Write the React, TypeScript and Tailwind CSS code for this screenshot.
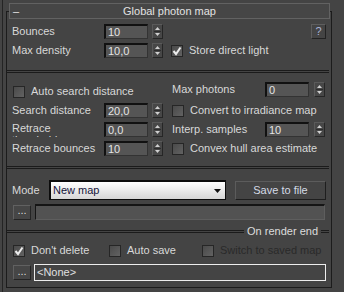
import React from 'react'

function Spinner() {
  return (
    <div className="w-[11px] h-[15px] border border-t-[#5a5a5a] border-l-[#5a5a5a] border-r-[#262626] border-b-[#262626] bg-[#474747] flex flex-col shrink-0">
      <svg width="9" height="13" viewBox="0 0 9 13">
        <path d="M4.5 2 L7 5 L2 5 Z" fill="#d0d0d0" />
        <line x1="1" y1="6.5" x2="8" y2="6.5" stroke="#2c2c2c" strokeWidth="1" />
        <path d="M2 8 L7 8 L4.5 11 Z" fill="#d0d0d0" />
      </svg>
    </div>
  )
}

function NumField({ value }: { value: string }) {
  return (
    <div className="w-[44px] h-[15px] shrink-0 bg-[#555555] border-t-2 border-l-2 border-t-[#111] border-l-[#111] border-r border-b border-r-[#333] border-b-[#333] pl-[2px] flex items-center text-[#e4e4e4] leading-none">
      {value}
    </div>
  )
}

function Check({ checked, label, disabled }: { checked?: boolean; label: string; disabled?: boolean }) {
  return (
    <div className="flex items-center gap-[6px] h-[15px]">
      <div className="w-[12px] h-[12px] shrink-0 border border-[#262626] bg-gradient-to-br from-[#4a4a4a] to-[#626262] flex items-center justify-center">
        {checked && (
          <svg width="10" height="10" viewBox="0 0 10 10">
            <path d="M1.5 5 L4 8 L8.5 1.5" fill="none" stroke="#ececec" strokeWidth="2" />
          </svg>
        )}
      </div>
      <span className={disabled ? 'text-[#2a2a2a] whitespace-nowrap' : 'text-[#d8d8d8] whitespace-nowrap'}>{label}</span>
    </div>
  )
}

function DotsButton() {
  return (
    <div className="w-[18px] h-[15px] shrink-0 border border-t-[#616161] border-l-[#616161] border-r-[#242424] border-b-[#242424] bg-[#464646] flex items-center justify-center text-[#dcdcdc] leading-none pb-[3px]">
      ...
    </div>
  )
}

function Separator() {
  return <div className="w-[322px] h-[3px] border-y border-[#1b1b1b] shrink-0" />
}

export default function App() {
  return (
    <div className="w-[344px] h-[292px] bg-[#444444] overflow-hidden flex font-['Liberation_Sans',Arial,sans-serif] text-[11px] text-[#d8d8d8]">
      <div className="ml-[2px] w-[1px] h-full bg-[#242424] shrink-0" />
      <div className="ml-[3px] mt-[11px] w-[326px] h-[277px] border border-[#1c1c1c] flex flex-col shrink-0">
        {/* rollout header */}
        <div className="-mt-[9px] ml-[2px] w-[321px] h-[16px] bg-[#464646] border border-[#626262] flex items-center relative shrink-0">
          <span className="absolute left-[3px] top-[-1px] text-[#e6e6e6]">–</span>
          <span className="w-full text-center text-[#e2e2e2]">Global photon map</span>
        </div>

        {/* section 1 */}
        <div className="mt-[5px] flex flex-col gap-[4px]">
          <div className="flex items-center h-[15px]">
            <div className="w-[165px] pl-[5px] flex items-center">
              <span className="w-[92px]">Bounces</span>
              <NumField value="10" />
              <div className="ml-[4px]"><Spinner /></div>
            </div>
            <div className="ml-[139px] w-[15px] h-[15px] border border-t-[#5e5e5e] border-l-[#5e5e5e] border-r-[#222] border-b-[#222] flex items-center justify-center text-[#aab4d8] leading-none">
              ?
            </div>
          </div>
          <div className="flex items-center h-[15px]">
            <div className="w-[164px] pl-[5px] flex items-center">
              <span className="w-[92px]">Max density</span>
              <NumField value="10,0" />
              <div className="ml-[4px]"><Spinner /></div>
            </div>
            <Check checked label="Store direct light" />
          </div>
        </div>

        <div className="mt-[12px]"><Separator /></div>

        {/* section 2 */}
        <div className="mt-[11px] flex">
          <div className="w-[165px] pl-[5px] flex flex-col gap-[4px]">
            <div className="pl-[1px]"><Check label="Auto search distance" /></div>
            <div className="flex items-center h-[15px]">
              <span className="w-[92px]">Search distance</span>
              <NumField value="20,0" />
              <div className="ml-[4px]"><Spinner /></div>
            </div>
            <div className="flex items-center h-[15px]">
              <span className="w-[78px] mr-[14px] h-[15px] overflow-hidden leading-[12px]">Retrace threshold</span>
              <NumField value="0,0" />
              <div className="ml-[4px]"><Spinner /></div>
            </div>
            <div className="flex items-center h-[15px]">
              <span className="w-[92px] whitespace-nowrap">Retrace bounces</span>
              <NumField value="10" />
              <div className="ml-[4px]"><Spinner /></div>
            </div>
          </div>
          <div className="flex flex-col gap-[4px]">
            <div className="flex items-center h-[15px] -mt-[2px] mb-[2px]">
              <span className="w-[93px]">Max photons</span>
              <NumField value="0" />
              <div className="ml-[5px]"><Spinner /></div>
            </div>
            <Check label="Convert to irradiance map" />
            <div className="flex items-center h-[15px]">
              <span className="w-[93px]">Interp. samples</span>
              <NumField value="10" />
              <div className="ml-[5px]"><Spinner /></div>
            </div>
            <Check label="Convex hull area estimate" />
          </div>
        </div>

        <div className="mt-[10px]"><Separator /></div>

        {/* section 3 */}
        <div className="mt-[11px] pl-[5px] flex items-center h-[20px]">
          <span className="w-[37px]">Mode</span>
          <div className="w-[177px] h-[20px] bg-gradient-to-b from-[#ffffff] to-[#d6d6d6] border-t-2 border-l-2 border-[#0c0c0c] border-r border-b flex items-center pl-[2px] pr-[4px] text-[#14143a]">
            <span className="flex-1">New map</span>
            <svg width="7" height="4" viewBox="0 0 7 4">
              <path d="M0 0 L7 0 L3.5 4 Z" fill="#111" />
            </svg>
          </div>
          <div className="ml-[9px] w-[91px] h-[19px] border border-t-[#5c5c5c] border-l-[#5c5c5c] border-r-[#1e1e1e] border-b-[#1e1e1e] flex items-center justify-center text-[#d4dbe6]">
            Save to file
          </div>
        </div>
        <div className="mt-[4px] pl-[6px] flex items-center h-[16px]">
          <DotsButton />
          <div className="ml-[4px] w-[290px] h-[16px] bg-[#525252] border-t-2 border-l border-[#151515] border-r border-b border-r-[#5e5e5e] border-b-[#5e5e5e]" />
        </div>

        {/* section 4 */}
        <div className="mt-[5px] flex items-center h-[13px] w-[322px]">
          <div className="flex-1 h-[3px] border-y border-[#1b1b1b]" />
          <span className="px-[3px] text-[#dcdcdc] leading-none">On render end</span>
          <div className="w-[8px] h-[3px] border-y border-[#1b1b1b]" />
        </div>
        <div className="mt-[5px] pl-[6px] flex items-center h-[15px]">
          <div className="w-[96px]"><Check checked label="Don't delete" /></div>
          <div className="w-[93px]"><Check label="Auto save" /></div>
          <Check disabled label="Switch to saved map" />
        </div>
        <div className="mt-[6px] pl-[6px] flex items-center h-[17px]">
          <DotsButton />
          <div className="ml-[3px] w-[292px] h-[17px] border border-[#ededed] flex items-center pl-[2px] text-[#e0e0e0]">
            {'<None>'}
          </div>
        </div>
      </div>
    </div>
  )
}
